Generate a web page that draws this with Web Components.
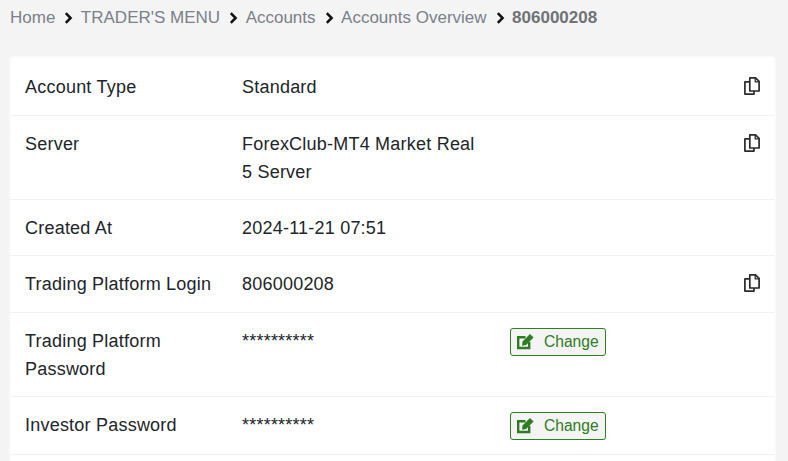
<!DOCTYPE html>
<html lang="en"><head><meta charset="utf-8">
<style>
html,body{margin:0;height:100%;overflow:hidden;background:#f4f4f4;font-family:"Liberation Sans",Arial,sans-serif}
body{padding:0 12px 0 9px;box-sizing:border-box;display:flex;flex-direction:column}
</style></head><body>
<template id="t-crumbs"><style>
:host{display:flex;flex:none;align-items:center;height:56px;box-sizing:border-box;padding:0 0 21px 1px;font-size:17px;color:#7b8089;white-space:nowrap}
svg{width:9px;height:12px;margin:0 7.5px 0 9px;flex:none}
b{font-weight:700;color:#6f7276}
</style><span>Home</span><svg viewBox="0 0 9 12"><path d="M1.8 1.2 6.6 6 1.8 10.8" fill="none" stroke="#111" stroke-width="2.5"/></svg><span>TRADER'S MENU</span><svg viewBox="0 0 9 12"><path d="M1.8 1.2 6.6 6 1.8 10.8" fill="none" stroke="#111" stroke-width="2.5"/></svg><span>Accounts</span><svg viewBox="0 0 9 12"><path d="M1.8 1.2 6.6 6 1.8 10.8" fill="none" stroke="#111" stroke-width="2.5"/></svg><span>Accounts Overview</span><svg viewBox="0 0 9 12"><path d="M1.8 1.2 6.6 6 1.8 10.8" fill="none" stroke="#111" stroke-width="2.5"/></svg><b>806000208</b></template>
<template id="t-card"><style>
:host{display:block;flex:1;min-height:0;background:#fff;border:2px solid #fbfbfb;border-bottom:0;border-radius:5px 5px 0 0;box-sizing:border-box;width:767px}
</style><slot></slot></template>
<template id="t-row"><style>
:host{display:grid;grid-template-columns:217px 268px 1fr 24px;padding:14px 14px 13.2px 14px;border-bottom:1px solid #f2f2f2;font-size:18px;letter-spacing:.22px;line-height:28px;color:#212529}
:host(:first-child){padding-top:14.6px;padding-bottom:14.4px}
.l{padding-right:16px}
.v{padding-right:25px}
.e{display:flex;justify-content:flex-start;align-items:flex-start}
.i{display:flex;justify-content:flex-end;align-items:flex-start}
</style><div class="l"><slot name="label"></slot></div><div class="v"><slot name="value"></slot></div><div class="e"><slot name="extra"></slot></div><div class="i"><slot name="icon"></slot></div></template>
<template id="t-copy"><style>
:host{display:block;width:16px;height:18px;margin:4px 0 0}
svg{display:block}
</style><svg width="16" height="18" viewBox="0 0 16 18" fill="#fff" stroke="#2b2b2b" stroke-width="1.7" stroke-linejoin="round"><path d="M5 4.9H.9V17.1H10V14"/><path d="M5.8.9H11.5L15.1 4.3V14H5.8Z"/><path d="M11.2 1V4.8H15" fill="none" stroke-width="1.3"/></svg></template>
<template id="t-btn"><style>
:host{display:inline-flex;align-items:center;box-sizing:border-box;height:28px;width:96px;margin:1px 0 .8px;border:1px solid #2e7d22;border-radius:3px;background:#f4f4f4;color:#2e7d22;font-size:15.6px;letter-spacing:0;padding-left:6px;gap:7px;line-height:1}
svg{flex:none}
</style><svg width="20" height="17" viewBox="0 0 20 17"><path d="M8.5 4.2H1.2V15H12.2V9" fill="none" stroke="#2e7d22" stroke-width="2.4"/><path d="M5.5 8.6 13 1.1l3.6 3.5-7.5 7.5-4 .6Z" fill="#2e7d22"/></svg><slot></slot></template>

<crumb-bar></crumb-bar>
<info-card>
<info-row><span slot="label">Account Type</span><span slot="value">Standard</span><copy-icon slot="icon"></copy-icon></info-row>
<info-row><span slot="label">Server</span><span slot="value">ForexClub-MT4 Market Real 5 Server</span><copy-icon slot="icon"></copy-icon></info-row>
<info-row><span slot="label">Created At</span><span slot="value">2024-11-21 07:51</span></info-row>
<info-row><span slot="label">Trading Platform Login</span><span slot="value">806000208</span><copy-icon slot="icon"></copy-icon></info-row>
<info-row><span slot="label">Trading Platform Password</span><span slot="value">**********</span><change-btn slot="extra">Change</change-btn></info-row>
<info-row><span slot="label">Investor Password</span><span slot="value">**********</span><change-btn slot="extra">Change</change-btn></info-row>
</info-card>
<script>
const reg=(n,t)=>customElements.define(n,class extends HTMLElement{constructor(){super();this.attachShadow({mode:'open'}).appendChild(document.getElementById(t).content.cloneNode(true))}});
reg('crumb-bar','t-crumbs');reg('info-card','t-card');reg('info-row','t-row');reg('copy-icon','t-copy');reg('change-btn','t-btn');
</script>
</body></html>
